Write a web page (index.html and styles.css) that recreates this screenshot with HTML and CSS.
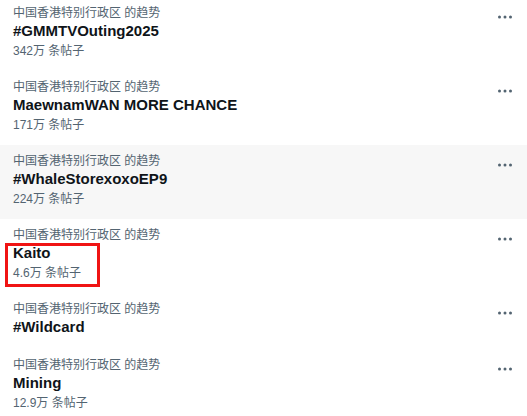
FILE: index.html
```html
<!DOCTYPE html>
<html lang="zh-CN">
  <head>
    <meta charset="UTF-8" />
    <meta name="viewport" content="width=device-width, initial-scale=1.0" />
    <title>趋势</title>
    <link rel="stylesheet" href="styles.css">
  </head>
  <body>
    <div class="trends">
      <div class="trend">
        <div class="trend-body">
          <div class="trend-label">中国香港特别行政区 的趋势</div>
          <div class="trend-title">#GMMTVOuting2025</div>
          <div class="trend-count">342万 条帖子</div>
        </div>
        <button class="more" aria-label="更多">
          <svg viewBox="0 0 15 4" width="15" height="4"><circle cx="1.5" cy="2" r="1.5"/><circle cx="7" cy="2" r="1.5"/><circle cx="12.5" cy="2" r="1.5"/></svg>
        </button>
      </div>

      <div class="trend">
        <div class="trend-body">
          <div class="trend-label">中国香港特别行政区 的趋势</div>
          <div class="trend-title">MaewnamWAN MORE CHANCE</div>
          <div class="trend-count">171万 条帖子</div>
        </div>
        <button class="more" aria-label="更多">
          <svg viewBox="0 0 15 4" width="15" height="4"><circle cx="1.5" cy="2" r="1.5"/><circle cx="7" cy="2" r="1.5"/><circle cx="12.5" cy="2" r="1.5"/></svg>
        </button>
      </div>

      <div class="trend hover">
        <div class="trend-body">
          <div class="trend-label">中国香港特别行政区 的趋势</div>
          <div class="trend-title">#WhaleStorexoxoEP9</div>
          <div class="trend-count">224万 条帖子</div>
        </div>
        <button class="more" aria-label="更多">
          <svg viewBox="0 0 15 4" width="15" height="4"><circle cx="1.5" cy="2" r="1.5"/><circle cx="7" cy="2" r="1.5"/><circle cx="12.5" cy="2" r="1.5"/></svg>
        </button>
      </div>

      <div class="trend">
        <div class="trend-body">
          <div class="trend-label">中国香港特别行政区 的趋势</div>
          <div class="trend-title">Kaito</div>
          <div class="trend-count">4.6万 条帖子</div>
        </div>
        <div class="marker"></div>
        <button class="more" aria-label="更多">
          <svg viewBox="0 0 15 4" width="15" height="4"><circle cx="1.5" cy="2" r="1.5"/><circle cx="7" cy="2" r="1.5"/><circle cx="12.5" cy="2" r="1.5"/></svg>
        </button>
      </div>

      <div class="trend">
        <div class="trend-body">
          <div class="trend-label">中国香港特别行政区 的趋势</div>
          <div class="trend-title">#Wildcard</div>
        </div>
        <button class="more" aria-label="更多">
          <svg viewBox="0 0 15 4" width="15" height="4"><circle cx="1.5" cy="2" r="1.5"/><circle cx="7" cy="2" r="1.5"/><circle cx="12.5" cy="2" r="1.5"/></svg>
        </button>
      </div>

      <div class="trend">
        <div class="trend-body">
          <div class="trend-label">中国香港特别行政区 的趋势</div>
          <div class="trend-title">Mining</div>
          <div class="trend-count">12.9万 条帖子</div>
        </div>
        <button class="more" aria-label="更多">
          <svg viewBox="0 0 15 4" width="15" height="4"><circle cx="1.5" cy="2" r="1.5"/><circle cx="7" cy="2" r="1.5"/><circle cx="12.5" cy="2" r="1.5"/></svg>
        </button>
      </div>
    </div>
  </body>
</html>
```

FILE: styles.css
```css
:root {
  --text-color: #0f1419;
  --muted-color: #536471;
  --hover-color: #f7f7f7;
  --mark-color: #f01414;
}
body {
  margin: 0;
  background: #ffffff;
  font-family: "Liberation Sans", "Noto Sans CJK SC", sans-serif;
  color: var(--text-color);
  overflow: hidden;
}
.trends {
  display: flex;
  flex-direction: column;
  margin-top: -3px;
}
.trend {
  position: relative;
  display: flex;
  justify-content: space-between;
  align-items: flex-start;
  padding: 8px 14px 12px 13px;
}
.trend.hover {
  background: var(--hover-color);
}
.trend-body {
  display: flex;
  flex-direction: column;
}
.trend-label {
  font-size: 12px;
  line-height: 16px;
  color: var(--muted-color);
}
.trend-title {
  font-size: 15px;
  line-height: 20px;
  font-weight: bold;
}
.trend-count {
  font-size: 12px;
  line-height: 16px;
  padding-top: 2px;
  color: var(--muted-color);
}
.more {
  display: flex;
  align-items: center;
  background: none;
  border: none;
  padding: 0;
  margin-top: 10px;
  fill: var(--muted-color);
}
/* red annotation box drawn over the Kaito trend */
.marker {
  position: absolute;
  left: 5px;
  top: 24px;
  width: 95px;
  height: 44px;
  box-sizing: border-box;
  border: 3px solid var(--mark-color);
}
```
